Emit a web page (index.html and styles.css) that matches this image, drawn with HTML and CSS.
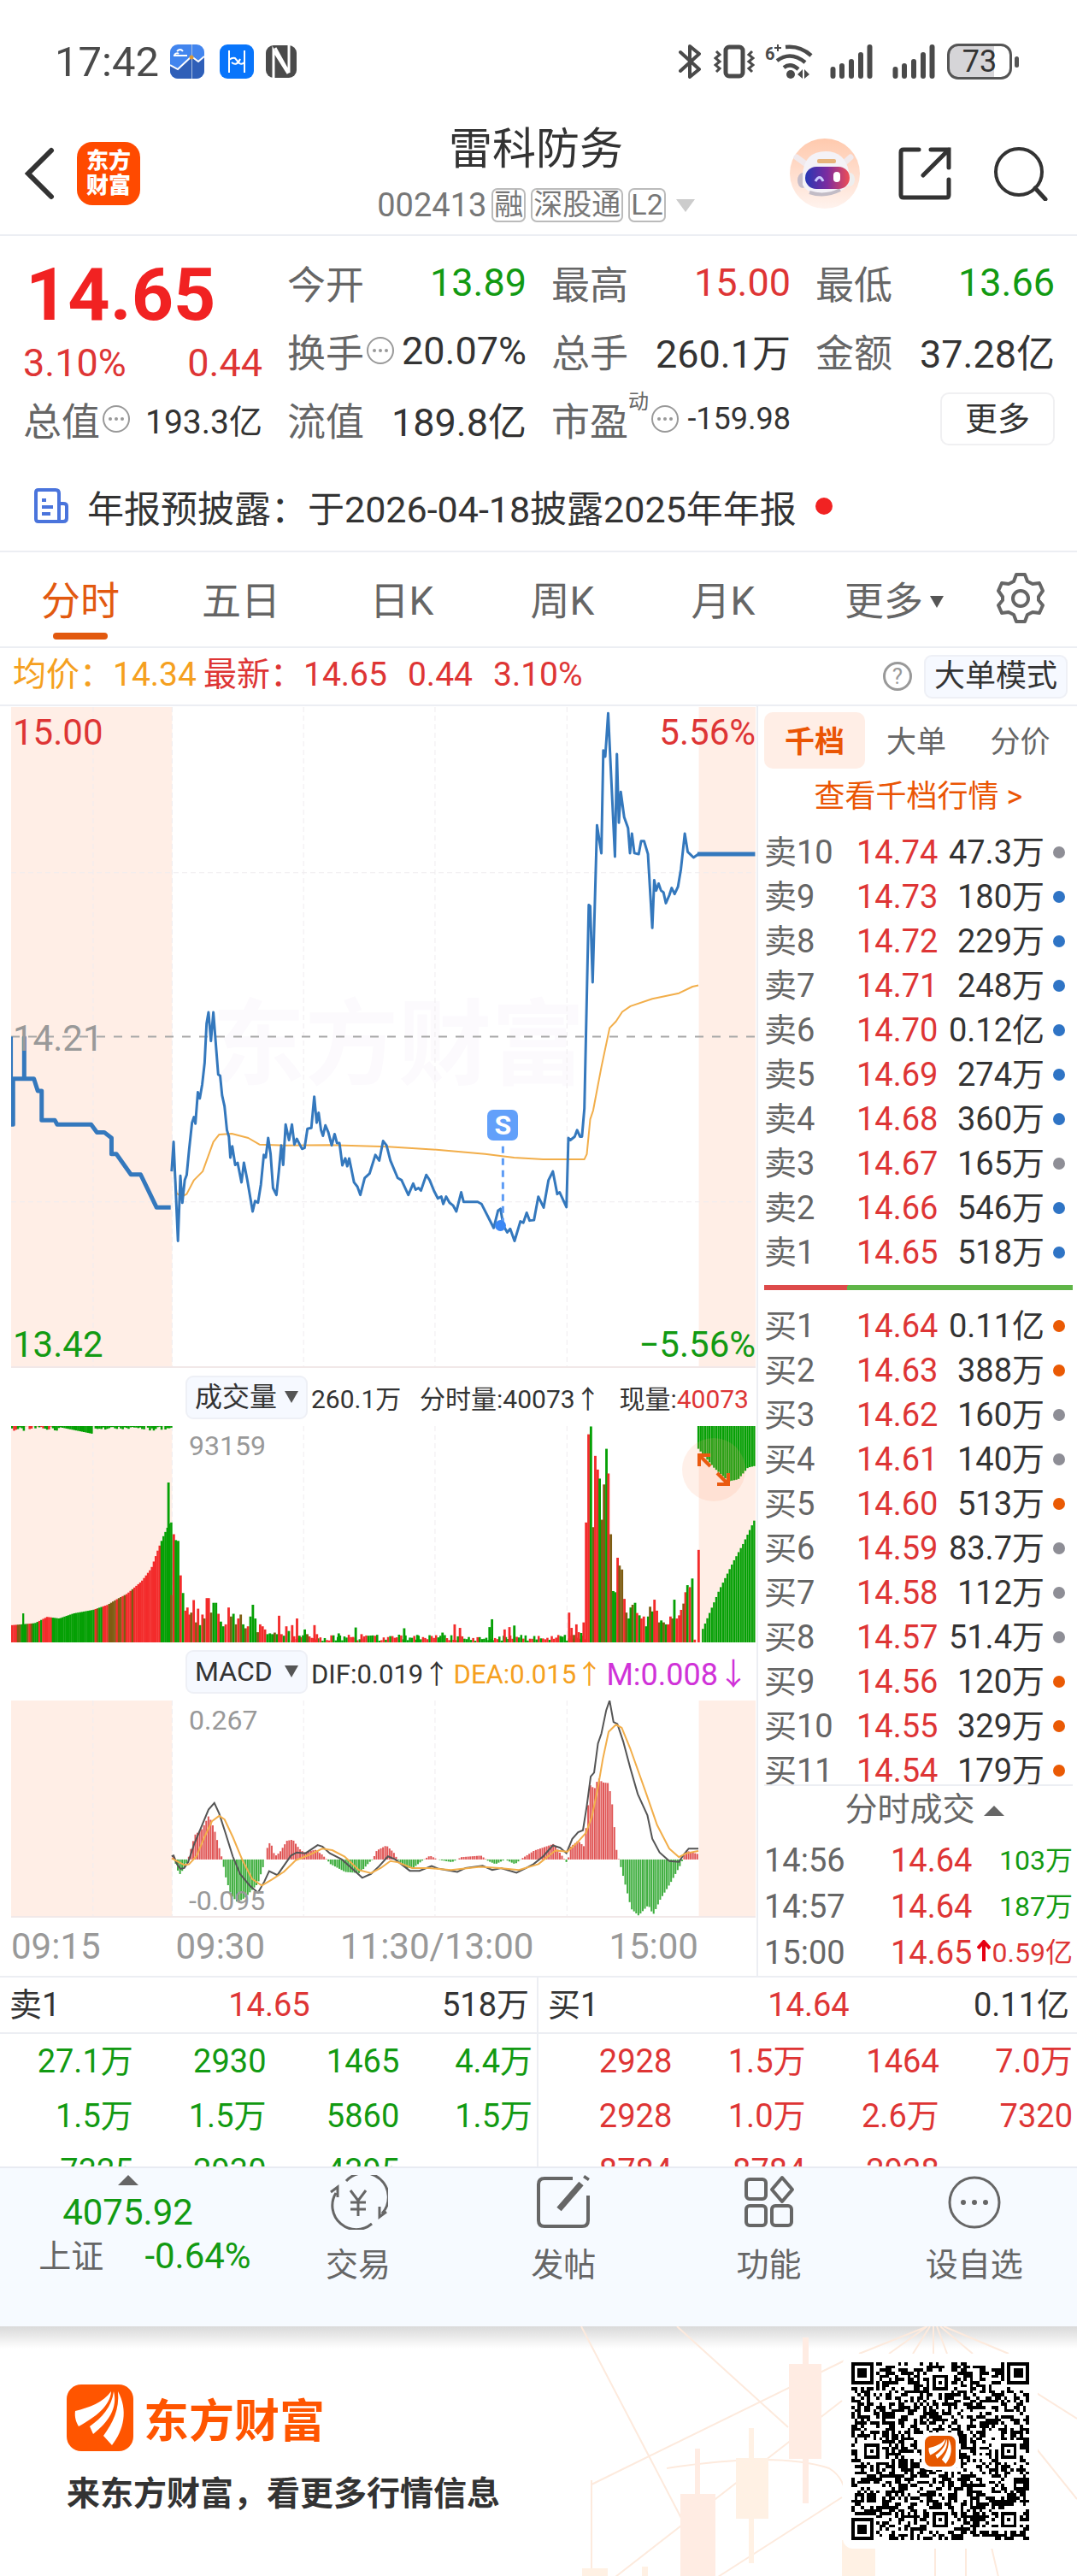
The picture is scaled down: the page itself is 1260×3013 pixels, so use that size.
FILE: index.html
```html
<!DOCTYPE html>
<html lang="zh-CN">
<head>
  <meta charset="utf-8">
  <meta name="viewport" content="width=device-width, initial-scale=1">
  <title>雷科防务 002413</title>
  <link rel="stylesheet" href="styles.css">
</head>
<body>
  <svg width="0" height="0" class="defs" aria-hidden="true">
    <symbol id="dots" viewBox="0 0 34 34">
      <circle cx="17" cy="17" r="15" fill="none" stroke="#999" stroke-width="2"/>
      <circle cx="10" cy="17" r="2" fill="#999"/><circle cx="17" cy="17" r="2" fill="#999"/><circle cx="24" cy="17" r="2" fill="#999"/>
    </symbol>
    <symbol id="signal" viewBox="0 0 50 40">
      <path d="M3.500 29v8M14 25v12M25 20v17M36 12v25M46.500 3v34" stroke="#4a4a4a" stroke-width="6" stroke-linecap="round"/>
    </symbol>
    <symbol id="brand" viewBox="0 0 78 78">
      <rect width="78" height="78" rx="17"/>
      <path d="M10 31c16-4 33-10 42-23-1 17-18 30-38 41-3-5-5-11-4-18z" fill="#fff"/>
      <path d="M55 8c5 19-6 36-24 50l-4-9c14-10 26-23 28-41z" fill="#fff"/>
      <path d="M60 8c12 22 7 45-7 63l-10-11c11-15 19-31 17-52z" fill="#fff"/>
    </symbol>
  </svg>

  <div class="statusbar">
    <div class="status-left">
      <span class="clock">17:42</span>
      <svg class="app-a" width="40" height="40" viewBox="0 0 40 40">
        <rect width="40" height="40" rx="9" fill="#4285ee"/>
        <path d="M0 24l9 5 16-15 8 6 7-6v17a9 9 0 0 1-9 9H9a9 9 0 0 1-9-9z" fill="#2f5fb8"/>
        <path d="M0 24l9 5 16-15 8 6 7-6" fill="none" stroke="#fff" stroke-width="2"/>
        <path d="M25.500 0v40" stroke="#a9bfe0"/>
        <path d="M5 12q3-3 5-1M8 8q4-4 7 0M4 13h16" stroke="#fff" stroke-width="2" fill="none"/>
        <circle cx="25" cy="15" r="2.500" fill="#d99a3a"/>
      </svg>
      <svg class="app-b" width="40" height="40" viewBox="0 0 40 40">
        <rect width="40" height="40" rx="9" fill="#0875fb"/>
        <path d="M11 7v26M29 7v26M11 18q4-3 7-2l5 6q3 2 6-1M14 21q6 5 10-4" fill="none" stroke="#fff" stroke-width="2"/>
      </svg>
      <svg width="36" height="38" viewBox="0 0 36 38">
        <rect width="36" height="38" rx="9" fill="#4a4a4a"/>
        <path d="M9 38V6l17 27M27 0v32L11 3" fill="none" stroke="#fff" stroke-width="3"/>
      </svg>
    </div>
    <div class="status-right">
      <svg class="bluetooth" width="26" height="40" viewBox="0 0 26 40">
        <path d="M2 9l22 20-11 9V2l11 9L2 31" fill="none" stroke="#4a4a4a" stroke-width="4" stroke-linejoin="round" stroke-linecap="round"/>
      </svg>
      <svg class="vibrate" width="48" height="40" viewBox="0 0 48 40">
        <rect x="14" y="3" width="20" height="34" rx="4" fill="none" stroke="#4a4a4a" stroke-width="5"/>
        <path d="M3 8l4 4-5 4 5 4-5 4 5 4-4 4M45 8l-4 4 5 4-5 4 5 4-5 4 4 4" fill="none" stroke="#4a4a4a" stroke-width="3"/>
      </svg>
      <svg class="wifi" width="56" height="42" viewBox="0 0 56 42">
        <text x="0" y="19" font-size="20" fill="#4a4a4a" font-weight="bold">6</text>
        <path d="M11 5h8M15 1v8" stroke="#4a4a4a" stroke-width="2"/>
        <path d="M24 4q17-2 30 10M14 20q16-12 33 2M22 28q8-6 17 2" fill="none" stroke="#4a4a4a" stroke-width="4.500"/>
        <circle cx="30" cy="36" r="5" fill="#4a4a4a"/>
        <path d="M44 30v11l-6-5zM46 30v11l6-5z" fill="#4a4a4a"/>
      </svg>
      <svg class="signal" width="50" height="40"><use href="#signal"/></svg>
      <svg class="signal" width="50" height="40"><use href="#signal"/></svg>
      <span class="battery">73</span>
    </div>
  </div>

  <header class="header">
    <div class="header-left">
      <button class="icon-btn" aria-label="返回">
        <svg width="36" height="62" viewBox="0 0 36 62"><path d="M32 4L5 31l27 27" fill="none" stroke="#333" stroke-width="6" stroke-linecap="round"/></svg>
      </button>
      <div class="app-logo">东方<br>财富</div>
    </div>
    <div class="header-title">
      <h1>雷科防务</h1>
      <div class="code"><span>002413</span><i>融</i><i>深股通</i><i>L2</i><b class="tri-down"></b></div>
    </div>
    <div class="header-right">
      <button class="icon-btn" aria-label="智能助手">
        <svg width="82" height="82" viewBox="0 0 82 82">
          <defs>
            <linearGradient id="halo" x1="0" y1="0" x2="0" y2="1"><stop offset="0" stop-color="#ffc9ad"/><stop offset="1" stop-color="#fff3ee"/></linearGradient>
            <linearGradient id="visor"><stop offset="0" stop-color="#2637b5"/><stop offset=".5" stop-color="#7d2b9f"/><stop offset="1" stop-color="#ef4f55"/></linearGradient>
          </defs>
          <circle cx="41" cy="41" r="41" fill="url(#halo)"/>
          <path d="M8 22l11 8M71 22l-9 8" stroke="#f1e9ec" stroke-width="7" stroke-linecap="round"/>
          <ellipse cx="15" cy="49" rx="6" ry="9" fill="#c5bcc8"/><ellipse cx="70" cy="48" rx="6" ry="8" fill="#eee"/>
          <path d="M15 42q2-27 27-27 22 0 27 23l2 12q-6 14-31 16-20-1-25-12z" fill="#f4f2f7"/>
          <path d="M23 63q18 6 36-3" stroke="#c2bcc6" stroke-width="4" fill="none"/>
          <rect x="18" y="33" width="52" height="26" rx="13" fill="url(#visor)"/>
          <rect x="32" y="24" width="22" height="5" rx="2" fill="#e7b47c"/>
          <path d="M30 50q5-9 9 0" stroke="#c9c8ff" stroke-width="3" fill="none"/><rect x="51" y="39" width="8" height="12" rx="4" fill="#fff"/>
        </svg>
      </button>
      <button class="icon-btn share" aria-label="分享">
        <svg width="62" height="62" viewBox="0 0 62 62"><path d="M24 3H6q-3 0-3 3v50q0 3 3 3h50q3 0 3-3V38M38 3h21v21M59 3L29 33" fill="none" stroke="#333" stroke-width="5" stroke-linecap="round"/></svg>
      </button>
      <button class="icon-btn" aria-label="搜索">
        <svg width="64" height="64" viewBox="0 0 64 64"><circle cx="30" cy="30" r="27" fill="none" stroke="#333" stroke-width="4"/><path d="M49 49l12 13" stroke="#333" stroke-width="5" stroke-linecap="round"/></svg>
      </button>
    </div>
  </header>

  <section class="quote">
    <div class="last">
      <strong>14.65</strong>
      <div class="change"><span>3.10%</span><span>0.44</span></div>
    </div>
    <div class="cell"><span class="name">今开</span><span class="down">13.89</span></div>
    <div class="cell"><span class="name">最高</span><span class="up">15.00</span></div>
    <div class="cell"><span class="name">最低</span><span class="down">13.66</span></div>
    <div class="cell"><span class="name">换手<svg class="dots"><use href="#dots"/></svg></span><span>20.07%</span></div>
    <div class="cell"><span class="name">总手</span><span>260.1万</span></div>
    <div class="cell"><span class="name">金额</span><span>37.28亿</span></div>
    <div class="cell"><span class="name">总值<svg class="dots"><use href="#dots"/></svg></span><span class="small">193.3亿</span></div>
    <div class="cell"><span class="name">流值</span><span>189.8亿</span></div>
    <div class="cell"><span class="name">市盈<sup>动</sup><svg class="dots"><use href="#dots"/></svg></span><span class="tiny">-159.98</span></div>
    <div class="cell end"><button class="more-btn">更多</button></div>
  </section>

  <a class="notice" href="#">
    <svg width="40" height="42" viewBox="0 0 40 42"><path d="M29 39H5q-3 0-3-3V5q0-3 3-3h20q4 0 4 4v33h5q4 0 4-4V21q0-3-4-3h-5M9 14h5M9 22h13M9 30h10" fill="none" stroke="#4a74dc" stroke-width="4"/></svg>
    <span>年报预披露：于2026-04-18披露2025年年报</span>
    <b></b>
  </a>

  <nav class="tabs">
    <button class="active">分时</button>
    <button>五日</button>
    <button>日K</button>
    <button>周K</button>
    <button>月K</button>
    <button class="tab-more">更多<b class="tri-down"></b></button>
    <button class="gear" aria-label="设置">
      <svg width="56" height="60" viewBox="0 0 56 60"><path d="M23 3h10l3 8 6 3 8-1 4 9-5 7v4l5 6-4 9-8-1-6 3-3 8H23l-3-8-6-3-8 1-4-9 5-6v-4l-5-7 4-9 8 1 6-3z" fill="none" stroke="#666" stroke-width="4" stroke-linejoin="round"/><circle cx="28" cy="31" r="9" fill="none" stroke="#666" stroke-width="4"/></svg>
    </button>
  </nav>

  <div class="legend">
    <span class="avg">均价：14.34</span>
    <span class="up">最新：14.65</span>
    <span class="up">0.44</span>
    <span class="up">3.10%</span>
    <span class="help">?</span>
    <button class="soft-btn">大单模式</button>
  </div>

  <main class="main">
    <div class="charts">
      <div class="plot price">
        <div class="watermark">东方财富</div>
        <svg viewBox="23 10 1535 1518" preserveAspectRatio="none">
          <path class="auction" d="M23 12H355V1528H23zM1441 12H1558V1528H1441z"/>
          <path class="grid" d="M192 12V1528M355 12V1528M626 12V1528M897 12V1528M1169 12V1528M23 393H1558M23 1150H1558"/>
          <path class="zero" d="M23 770H1558"/>
          <polyline class="avg-line" points="358,1060 364,1130 375,1138 385,1132 400,1100 418,1080 440,1012 452,995 478,993 512,1003 535,1018 590,1020 680,1019 800,1023 900,1030 1000,1040 1060,1048 1120,1052 1205,1052 1210,1040 1217,960 1223,940 1240,840 1257,750 1270,735 1283,713 1300,700 1345,683 1400,670 1428,655 1440,652"/>
          <path class="price-line" d="M24 770V867"/>
          <path class="price-line thick" d="M20 972H27V867H50V772V867H70L78 895H86V962H113L118 972H188L200 990H215L230 1003V1040H240L270 1087H290L323 1163H352M1438 350H1557"/>
          <polyline class="price-line" points="354,1080 358,1012 367,1240 372,1090 376,1152 381,1100 385,1088 390,1030 396,968 400,955 403,970 408,898 412,912 417,880 422,830 426,740 430,714 435,780 440,714 446,800 450,857 454,860 458,905 463,930 468,985 472,1000 475,1048 479,1022 485,1065 490,1060 498,1105 503,1060 510,1100 521,1172 526,1148 532,1152 538,1110 544,1042 548,1048 553,1003 558,1040 563,1118 570,1134 575,1080 580,1020 584,1065 589,972 596,1008 602,972 607,1018 612,1005 618,1018 623,1028 628,1026 634,982 642,980 648,908 653,968 657,945 662,985 666,998 671,974 677,990 684,1020 690,994 695,1015 700,1015 706,1066 712,1050 716,1068 720,1050 730,1105 737,1115 743,1134 752,1095 762,1085 774,1042 782,1055 790,1010 797,1020 805,1055 820,1095 828,1100 842,1134 852,1108 857,1122 863,1118 868,1124 879,1088 886,1100 895,1125 903,1142 910,1138 914,1155 920,1138 927,1152 934,1158 941,1172 951,1128 956,1150 985,1150 993,1155 1018,1210 1027,1170 1032,1166 1038,1205 1046,1220 1052,1212 1061,1240 1073,1195 1079,1198 1086,1175 1092,1193 1101,1192 1110,1138 1121,1163 1131,1100 1140,1080 1149,1132 1154,1128 1168,1162 1172,1003 1176,1008 1185,1000 1190,985 1196,1000 1200,1000 1205,935 1214,467 1217,470 1222,645 1231,284 1240,348 1244,112 1248,126 1254,26 1268,356 1272,120 1276,278 1280,207 1287,265 1295,290 1299,348 1303,303 1308,348 1317,350 1322,320 1328,320 1336,350 1345,520 1349,410 1353,434 1358,418 1363,434 1368,438 1373,463 1380,445 1385,428 1391,442 1398,425 1404,385 1412,303 1418,345 1430,358 1440,350"/>
          <path class="sell-line" d="M1037 1022V1195"/>
        </svg>
        <span class="tag top up">15.00</span>
        <span class="tag top right up">5.56%</span>
        <span class="tag middle">14.21</span>
        <span class="tag bottom down">13.42</span>
        <span class="tag bottom right down">−5.56%</span>
        <span class="sell-mark">S</span>
        <span class="sell-dot"></span>
      </div>

      <div class="indicator">
        <button class="soft-btn">成交量<b class="tri-down"></b></button>
        <div class="values">
          <span>260.1万</span><span>分时量:40073↑</span><span>现量:<em class="up">40073</em></span>
        </div>
      </div>
      <div class="plot volume">
        <svg id="volume" viewBox="23 149 1535 552" preserveAspectRatio="none">
          <path class="auction" d="M23 149H355V701H23zM1441 149H1558V701H1441z"/>
          <path class="grid" d="M192 149V701M355 149V701M626 149V701M897 149V701M1169 149V701"/>
        </svg>
        <span class="scale top">93159</span>
        <button class="expand" aria-label="放大">
          <svg width="38" height="38" viewBox="0 0 38 38"><path d="M2 15V2h13M2 2l13 13M23 23l13 13M36 23v13H23" fill="none" stroke="#ea5a10" stroke-width="4"/></svg>
        </button>
      </div>

      <div class="indicator">
        <button class="soft-btn">MACD<b class="tri-down"></b></button>
        <div class="values macd-values">
          <span>DIF:0.019↑</span><span class="avg">DEA:0.015↑</span><span class="macd">M:0.008↓</span>
        </div>
      </div>
      <div class="plot macd-plot">
        <svg id="macd" viewBox="23 850 1535 553" preserveAspectRatio="none">
          <path class="auction" d="M23 850H355V1403H23zM1441 850H1558V1403H1441z"/>
          <path class="grid" d="M192 850V1403M355 850V1403M626 850V1403M897 850V1403M1169 850V1403"/>
          <g id="macdBars"></g>
          <polyline class="dif" points="354,1250 358,1248 365,1270 372,1282 380,1280 388,1265 400,1220 415,1175 430,1130 442,1113 452,1140 465,1190 480,1250 495,1295 515,1325 532,1343 545,1315 555,1288 572,1298 600,1248 612,1240 630,1242 655,1221 665,1225 680,1242 705,1258 725,1280 747,1305 765,1295 782,1275 800,1250 815,1258 845,1287 865,1287 890,1275 905,1282 943,1290 960,1280 995,1274 1015,1285 1033,1280 1065,1292 1085,1280 1100,1270 1120,1250 1140,1222 1155,1228 1168,1242 1180,1205 1192,1188 1202,1183 1210,1120 1218,1045 1225,1035 1233,960 1240,935 1250,875 1257,850 1265,905 1273,910 1285,955 1300,1025 1315,1090 1335,1145 1345,1205 1360,1240 1380,1262 1400,1264 1410,1245 1420,1230 1440,1230"/>
          <polyline class="avg-line" points="354,1255 380,1272 390,1270 405,1250 420,1205 437,1160 452,1146 463,1155 480,1200 500,1260 520,1308 540,1325 560,1310 585,1290 610,1260 640,1245 665,1230 685,1234 710,1250 740,1285 765,1293 785,1280 805,1262 820,1265 850,1280 885,1280 930,1285 990,1277 1030,1280 1070,1285 1110,1270 1145,1235 1170,1238 1190,1215 1208,1190 1220,1150 1232,1080 1243,1000 1255,930 1270,912 1282,920 1300,975 1330,1080 1355,1170 1380,1230 1400,1252 1415,1242 1440,1236"/>
        </svg>
        <span class="scale top">0.267</span>
        <span class="scale bottom">-0.095</span>
      </div>
      <div class="axis"><span>09:15</span><span>09:30</span><span>11:30/13:00</span><span>15:00</span></div>
    </div>

    <aside class="side">
      <div class="side-tabs"><button class="active">千档</button><button>大单</button><button>分价</button></div>
      <a class="depth-link" href="#">查看千档行情 &gt;</a>
      <table class="book">
        <tr><th>卖10</th><td>14.74</td><td>47.3万</td><td><b></b></td></tr>
        <tr><th>卖9</th><td>14.73</td><td>180万</td><td><b class="blue"></b></td></tr>
        <tr><th>卖8</th><td>14.72</td><td>229万</td><td><b class="blue"></b></td></tr>
        <tr><th>卖7</th><td>14.71</td><td>248万</td><td><b class="blue"></b></td></tr>
        <tr><th>卖6</th><td>14.70</td><td>0.12亿</td><td><b class="blue"></b></td></tr>
        <tr><th>卖5</th><td>14.69</td><td>274万</td><td><b class="blue"></b></td></tr>
        <tr><th>卖4</th><td>14.68</td><td>360万</td><td><b class="blue"></b></td></tr>
        <tr><th>卖3</th><td>14.67</td><td>165万</td><td><b></b></td></tr>
        <tr><th>卖2</th><td>14.66</td><td>546万</td><td><b class="blue"></b></td></tr>
        <tr><th>卖1</th><td>14.65</td><td>518万</td><td><b class="blue"></b></td></tr>
      </table>
      <div class="ratio"></div>
      <div class="buy-scroll">
        <table class="book">
          <tr><th>买1</th><td>14.64</td><td>0.11亿</td><td><b class="orange"></b></td></tr>
          <tr><th>买2</th><td>14.63</td><td>388万</td><td><b class="orange"></b></td></tr>
          <tr><th>买3</th><td>14.62</td><td>160万</td><td><b></b></td></tr>
          <tr><th>买4</th><td>14.61</td><td>140万</td><td><b></b></td></tr>
          <tr><th>买5</th><td>14.60</td><td>513万</td><td><b class="orange"></b></td></tr>
          <tr><th>买6</th><td>14.59</td><td>83.7万</td><td><b></b></td></tr>
          <tr><th>买7</th><td>14.58</td><td>112万</td><td><b></b></td></tr>
          <tr><th>买8</th><td>14.57</td><td>51.4万</td><td><b></b></td></tr>
          <tr><th>买9</th><td>14.56</td><td>120万</td><td><b class="orange"></b></td></tr>
          <tr><th>买10</th><td>14.55</td><td>329万</td><td><b class="orange"></b></td></tr>
          <tr><th>买11</th><td>14.54</td><td>179万</td><td><b class="orange"></b></td></tr>
        </table>
      </div>
      <button class="trades-title">分时成交<b class="tri-up"></b></button>
      <table class="trades">
        <tr><th>14:56</th><td>14.64</td><td class="down">103万</td></tr>
        <tr><th>14:57</th><td>14.64</td><td class="down">187万</td></tr>
        <tr><th>15:00</th><td>14.65</td><td class="up"><svg width="16" height="26" viewBox="0 0 16 26"><path d="M8 25V3M1 10l7-8 7 8" fill="none" stroke="#e60012" stroke-width="4"/></svg>0.59亿</td></tr>
      </table>
    </aside>
  </main>

  <section class="queues">
    <div class="queue sell">
      <div class="queue-head"><span>卖1</span><span class="up">14.65</span><span>518万</span></div>
      <div class="queue-list down">
        <span>27.1万</span><span>2930</span><span>1465</span><span>4.4万</span>
        <span>1.5万</span><span>1.5万</span><span>5860</span><span>1.5万</span>
        <span>7325</span><span>2930</span><span>4395</span>
      </div>
    </div>
    <div class="queue">
      <div class="queue-head"><span>买1</span><span class="up">14.64</span><span>0.11亿</span></div>
      <div class="queue-list up">
        <span>2928</span><span>1.5万</span><span>1464</span><span>7.0万</span>
        <span>2928</span><span>1.0万</span><span>2.6万</span><span>7320</span>
        <span>8784</span><span>8784</span><span>2928</span>
      </div>
    </div>
  </section>

  <nav class="toolbar">
    <button class="index">
      <b class="tri-up"></b>
      <span class="index-value">4075.92</span>
      <span class="index-row"><span>上证</span><span class="down">-0.64%</span></span>
    </button>
    <button>
      <svg viewBox="0 0 70 64"><path d="M21 7a28 28 0 0 1 42 38M51 57A28 28 0 0 1 9 21M3 20l8-6v12M68 43l-8 6V37M26 18l9 12 9-12M35 30v18M26 32h18M26 40h18" fill="none" stroke="#666" stroke-width="3"/></svg>
      交易
    </button>
    <button>
      <svg viewBox="0 0 70 64"><path d="M46 4H13q-7 0-7 7v42q0 7 7 7h44q7 0 7-7V24" fill="none" stroke="#666" stroke-width="4"/><path d="M56 10L30 40M61 5l2-3" stroke="#666" stroke-width="7"/></svg>
      发帖
    </button>
    <button>
      <svg viewBox="0 0 70 64"><g fill="none" stroke="#666" stroke-width="4"><rect x="8" y="5" width="23" height="23" rx="4"/><path d="M50 3l12 14-12 14-12-14z" stroke-linejoin="round"/><rect x="8" y="36" width="23" height="23" rx="4"/><rect x="38" y="36" width="23" height="23" rx="4"/></g></svg>
      功能
    </button>
    <button>
      <svg viewBox="0 0 70 64"><circle cx="35" cy="32" r="29" fill="none" stroke="#666" stroke-width="3"/><g fill="#666"><circle cx="22" cy="32" r="3"/><circle cx="35" cy="32" r="3"/><circle cx="48" cy="32" r="3"/></g></svg>
      设自选
    </button>
  </nav>

  <footer class="promo">
    <svg class="promo-art" viewBox="660 2720 600 293" aria-hidden="true">
      <g fill="none" stroke="#fdeadd" stroke-width="2">
        <path d="M680 2720L800 2950M792 2720L922 2838M692 2905L988 2760M720 3013L985 2807M840 3013L985 2920M692 2900V3013M780 2886q130-20 190 0 20 12 20 40"/>
        <path d="M1085 2720L1005 2752M1085 2720L1040 2752M1088 2720L1068 2752M1092 2720V2752M1096 2720L1108 2752M1100 2720L1138 2752M1104 2720L1180 2752M1200 2790L1260 2828M1210 2860L1260 2922M1094 2970V3013M1130 2970V3013M1158 2970L1168 3013"/>
      </g>
      <g fill="#fff1e4">
        <path d="M861 2874h38v71h-38zM876 2839h6v158h-6zM985 2970h39v43h-39zM681 3003h30v10h-30zM751 3001h7v12h-7z"/>
        <path d="M923 2764h38v111h-38zM939 2733h7v194h-7zM796 2916h41v97h-41zM813 2863h6v60h-6z" fill="#ffece3"/>
      </g>
    </svg>
    <div class="promo-text">
      <div class="promo-brand"><svg width="78" height="78" fill="#ff5500"><use href="#brand"/></svg>东方财富</div>
      <p>来东方财富，看更多行情信息</p>
    </div>
    <div class="qr">
      <svg id="qr" viewBox="0 0 57 57" shape-rendering="crispEdges" role="img" aria-label="二维码"></svg>
      <span class="qr-logo"><svg width="36" height="36" viewBox="0 0 78 78" fill="#e65800"><use href="#brand"/></svg></span>
    </div>
  </footer>

  <script src="script.js"></script>
</body>
</html>
```
FILE: styles.css
```css
* {
  margin: 0;
  padding: 0;
  box-sizing: border-box;
}

body {
  font-family: Roboto, "Noto Sans CJK SC", sans-serif;
  font-size: 38px;
  color: #333;
  background: #fff;
}

button {
  font: inherit;
  color: inherit;
  background: none;
  border: none;
  cursor: pointer;
}

a {
  color: inherit;
  text-decoration: none;
}

i, em {
  font-style: normal;
}

svg {
  display: block;
  flex: none;
}

.defs {
  position: absolute;
}

.up {
  color: #de3535;
}

.down {
  color: #129a12;
}

.avg {
  color: #f5a020;
}

.tri-down,
.tri-up {
  display: inline-block;
  border: 8px solid transparent;
  border-top: 14px solid #555;
  border-bottom: 0;
}

.tri-up {
  border: 12px solid transparent;
  border-bottom: 12px solid #666;
  border-top: 0;
}

/* status bar */
.statusbar {
  display: flex;
  justify-content: space-between;
  align-items: center;
  height: 98px;
  padding: 46px 76px 0 64px;
}

.status-left,
.status-right {
  display: flex;
  align-items: center;
}

.clock {
  font-size: 49px;
  color: #4a4a4a;
  margin-right: 13px;
}

.app-a {
  margin-right: 18px;
}

.app-b {
  margin-right: 14px;
}

.bluetooth {
  margin-right: 15px;
}

.vibrate {
  margin-right: 12px;
}

.wifi {
  margin-right: 20px;
}

.signal {
  margin-right: 23px;
}

.signal + .signal {
  margin-right: 14px;
}

.battery {
  position: relative;
  width: 76px;
  height: 42px;
  border: 3px solid #555;
  border-radius: 13px;
  background: linear-gradient(90deg, #d6d5d8 75%, #fff 75%);
  font-size: 36px;
  line-height: 37px;
  text-align: center;
}

.battery::after {
  content: '';
  position: absolute;
  right: -11px;
  top: 12px;
  width: 5px;
  height: 13px;
  border-radius: 3px;
  background: #555;
}

/* header */
.header {
  display: grid;
  grid-template-columns: 1fr auto 1fr;
  align-items: center;
  padding: 47px 34px 14px 28px;
  border-bottom: 2px solid #eceef3;
}

.header-left,
.header-right {
  display: flex;
  align-items: center;
}

.header-left {
  gap: 26px;
}

.header-right {
  justify-content: flex-end;
}

.share {
  margin: 0 49px 0 45px;
}

.app-logo {
  width: 74px;
  height: 74px;
  padding-top: 8px;
  border-radius: 18px;
  background: #ff4a00;
  color: #fff;
  font-size: 26px;
  font-weight: 900;
  line-height: 29px;
  text-align: center;
}

.header-title h1 {
  font-size: 51px;
  font-weight: 400;
  line-height: 60px;
  text-align: center;
}

.code {
  display: flex;
  align-items: center;
  gap: 6px;
  height: 40px;
  margin-top: 15px;
  color: #777;
}

.code i {
  height: 40px;
  padding: 0 1px;
  border: 2px solid #bbb;
  border-radius: 7px;
  font-size: 34px;
  line-height: 34px;
}

.code .tri-down {
  margin-left: 6px;
  border-width: 15px 11px 0;
  border-top-color: #ccc;
}

/* quote summary */
.quote {
  display: grid;
  grid-template-columns: repeat(4, 1fr);
  grid-auto-rows: 80px;
  column-gap: 29px;
  padding: 14px 26px 0 27px;
  font-size: 45px;
}

.last {
  grid-row: span 2;
}

.last strong {
  display: block;
  padding-left: 3px;
  color: #f12222;
  font-size: 86px;
  line-height: 110px;
}

.change {
  display: flex;
  justify-content: space-between;
  color: #de3535;
  line-height: 50px;
}

.cell {
  display: flex;
  justify-content: space-between;
  align-items: center;
}

.cell.end {
  justify-content: flex-end;
}

.cell .name {
  display: flex;
  align-items: center;
  color: #666;
}

.cell sup {
  align-self: flex-start;
  font-size: 24px;
  line-height: 24px;
}

.cell .small {
  font-size: 39px;
}

.cell .tiny {
  font-size: 36px;
}

.dots {
  width: 34px;
  height: 34px;
  margin-left: 2px;
}

.more-btn {
  width: 134px;
  height: 62px;
  border: 2px solid #f0f0f2;
  border-radius: 10px;
  font-size: 38px;
  line-height: 56px;
}

.notice {
  display: flex;
  align-items: center;
  gap: 22px;
  height: 116px;
  padding: 9px 40px 0;
  border-bottom: 2px solid #eceef3;
  font-size: 43px;
}

.notice b {
  width: 20px;
  height: 20px;
  border-radius: 50%;
  background: #f12222;
}

/* period tabs */
.tabs {
  display: grid;
  grid-template-columns: repeat(5, 188fr) 212fr 84fr;
  height: 112px;
  padding-right: 24px;
  border-bottom: 2px solid #eceef3;
  font-size: 46px;
  color: #666;
}

.tabs button {
  position: relative;
  padding-bottom: 4px;
}

.tabs .active {
  color: #e2590f;
}

.tabs .active::after {
  content: '';
  position: absolute;
  left: calc(50% - 32px);
  width: 64px;
  bottom: 8px;
  height: 8px;
  border-radius: 4px;
  background: #e2590f;
}

.tab-more .tri-down {
  margin: 0 0 8px 8px;
}

.gear svg {
  margin: 0 auto;
}

.legend {
  display: flex;
  align-items: center;
  gap: 24px;
  height: 68px;
  padding: 0 11px 0 15px;
  border-bottom: 2px solid #eceef3;
}

.legend .avg,
.legend .up {
  font-size: 39px;
  line-height: 60px;
  padding-bottom: 4px;
}

.legend .avg {
  margin-right: -16px;
}

.help {
  width: 34px;
  height: 34px;
  margin: 0 -10px 0 auto;
  border: 3px solid #999;
  border-radius: 50%;
  color: #999;
  font-size: 26px;
  line-height: 29px;
  text-align: center;
}

.soft-btn {
  height: 51px;
  padding: 0 10px;
  border: 2px solid #eef0f6;
  border-radius: 9px;
  background: #f6f9ff;
  font-size: 36px;
  line-height: 46px;
}

/* charts */
.main {
  display: grid;
  grid-template-columns: 1fr 373px;
  border-bottom: 2px solid #eceef3;
}

.charts {
  padding: 0 1px 0 13px;
  border-right: 2px solid #eceef3;
}

.plot {
  position: relative;
}

.plot > svg {
  position: relative;
  width: 100%;
  height: 100%;
}

.plot svg * {
  vector-effect: non-scaling-stroke;
}

.price {
  height: 774px;
  border-bottom: 2px solid #f1e8e8;
}

.volume {
  height: 253px;
}

.macd-plot {
  height: 254px;
  border-bottom: 2px solid #f1e8e8;
}

.auction {
  fill: #ffeee6;
}

.grid {
  fill: none;
  stroke: #efecef;
  stroke-width: 1;
  stroke-dasharray: 6 4;
}

.zero {
  stroke: #a8a8a8;
  stroke-width: 2;
  stroke-dasharray: 10 10;
}

.price-line,
.avg-line,
.dif {
  fill: none;
  stroke: #3478bd;
  stroke-width: 3;
}

.price-line.thick {
  stroke-width: 5;
}

.avg-line {
  stroke: #f2ae4a;
  stroke-width: 2;
}

.dif {
  stroke: #555;
  stroke-width: 2;
}

.price-line,
.avg-line {
  stroke-linejoin: round;
}

.sell-line {
  stroke: #5d9cf5;
  stroke-width: 3;
  stroke-dasharray: 8 6;
}

.watermark {
  position: absolute;
  top: 50%;
  left: 52%;
  transform: translate(-50%, -50%);
  color: #fcfafd;
  font-size: 109px;
  font-weight: 700;
  white-space: nowrap;
}

.tag {
  position: absolute;
  left: 2px;
  font-size: 42px;
  line-height: 50px;
}

.tag.right {
  left: auto;
  right: 0;
}

.tag.top {
  top: 6px;
}

.tag.middle {
  top: 364px;
  color: #999;
}

.tag.bottom {
  bottom: 0;
}

.sell-mark {
  position: absolute;
  left: 64%;
  top: 472px;
  width: 36px;
  height: 36px;
  border-radius: 7px;
  background: #62a0fa;
  color: #fff;
  font-size: 32px;
  font-weight: 700;
  line-height: 36px;
  text-align: center;
}

.sell-dot {
  position: absolute;
  left: 65%;
  top: 601px;
  width: 13px;
  height: 13px;
  border-radius: 50%;
  background: #3b88f5;
}

.indicator {
  display: flex;
  align-items: center;
  gap: 4px;
  height: 68px;
  padding: 0 8px 0 204px;
  font-size: 30px;
}

.indicator .soft-btn {
  display: flex;
  justify-content: space-between;
  align-items: center;
  width: 143px;
  padding: 0 9px;
  font-size: 32px;
}

.values {
  display: flex;
  flex: 1;
  justify-content: space-between;
  align-items: center;
  white-space: nowrap;
}

.macd-values {
  font-size: 31px;
}

.macd {
  color: #d033d8;
  font-size: 36px;
}

.scale {
  position: absolute;
  left: 208px;
  color: #999;
  font-size: 32px;
  line-height: 36px;
}

.scale.top {
  top: 5px;
}

.scale.bottom {
  bottom: 0;
}

.expand {
  position: absolute;
  right: 12px;
  top: 14px;
  width: 74px;
  height: 74px;
  padding-left: 18px;
  border-radius: 50%;
  background: rgba(255, 160, 120, 0.16);
}

.axis {
  display: flex;
  justify-content: space-between;
  padding-right: 67px;
  color: #999;
  font-size: 42px;
  line-height: 68px;
}

/* order book */
.side {
  padding: 7px 5px 0 7px;
}

.side-tabs {
  display: grid;
  grid-template-columns: 118px 120px 1fr;
  height: 66px;
  color: #666;
  font-size: 35px;
}

.side-tabs button {
  padding-bottom: 4px;
}

.side-tabs .active {
  border-radius: 10px;
  background: #ffeee6;
  color: #ea5504;
  font-weight: 700;
}

.depth-link {
  display: block;
  margin-bottom: 6px;
  color: #ea5504;
  font-size: 36px;
  line-height: 66px;
  text-align: center;
}

.book,
.trades {
  width: 100%;
  border-collapse: collapse;
  table-layout: fixed;
  line-height: 44px;
}

.book tr {
  height: 52px;
}

.book th {
  width: 108px;
  color: #666;
  font-weight: 400;
  text-align: left;
}

.book td:nth-child(2) {
  width: 96px;
  color: #de3535;
}

.book td:nth-child(3) {
  text-align: right;
}

.book td:last-child {
  width: 33px;
}

.book b {
  display: block;
  width: 14px;
  height: 14px;
  margin: 0 auto;
  border-radius: 50%;
  background: #8e8e96;
}

.book .blue {
  background: #2f74c5;
}

.book .orange {
  background: #ea5a04;
}

.ratio {
  height: 6px;
  margin: 12px 0 16px;
  background: linear-gradient(100deg, #dd4a4a 27%, #5fb548 27%);
}

.buy-scroll {
  height: 562px;
  overflow: hidden;
}

.trades-title {
  display: block;
  width: 100%;
  padding: 0 0 6px 14px;
  border-top: 2px solid #eceef3;
  color: #666;
  line-height: 54px;
}

.trades-title .tri-up {
  margin: 0 0 5px 10px;
}

.trades tr {
  height: 54px;
}

.trades th {
  width: 148px;
  color: #666;
  font-weight: 400;
  text-align: left;
}

.trades td:nth-child(2) {
  width: 96px;
  color: #de3535;
}

.trades td:last-child {
  font-size: 32px;
  text-align: right;
  white-space: nowrap;
}

.trades svg {
  display: inline-block;
  margin-right: 2px;
}

/* order queues */
.queues {
  display: grid;
  grid-template-columns: 1fr 1fr;
}

.sell {
  border-right: 2px solid #eceef3;
}

.queue-head {
  display: grid;
  grid-template-columns: 1fr auto 1fr;
  padding: 0 9px 0 11px;
  border-bottom: 2px solid #eceef3;
  line-height: 64px;
}

.queue-head span:last-child {
  text-align: right;
}

.queue-list {
  display: grid;
  grid-template-columns: repeat(4, 1fr);
  grid-auto-rows: 64px;
  height: 155px;
  padding-right: 5px;
  overflow: hidden;
  line-height: 64px;
  text-align: right;
}

.toolbar {
  display: grid;
  grid-template-columns: 299px repeat(4, 1fr);
  height: 187px;
  border-top: 2px solid #e8ebf2;
  background: #f6faff;
  color: #666;
}

.toolbar button {
  display: flex;
  flex-direction: column;
  align-items: center;
  padding-top: 8px;
  line-height: 54px;
}

.toolbar svg {
  width: 70px;
  height: 64px;
  margin-bottom: 14px;
}

.index-value {
  color: #129a12;
  font-size: 42px;
  line-height: 48px;
  margin-top: 8px;
}

.index-row {
  display: flex;
  gap: 48px;
  padding-left: 40px;
}

.index-row .down {
  font-size: 42px;
}

/* promotion footer */
.promo {
  position: relative;
  display: flex;
  justify-content: space-between;
  align-items: flex-start;
  height: 293px;
  padding: 32px 46px 0 78px;
  overflow: hidden;
}

.promo::before {
  content: '';
  position: absolute;
  inset: 0 0 auto;
  height: 26px;
  background: linear-gradient(rgba(0, 0, 0, 0.15), transparent);
}

.promo-art {
  position: absolute;
  top: 0;
  right: 0;
  width: 600px;
  height: 293px;
}

.promo-text {
  padding-top: 36px;
}

.promo-brand {
  display: flex;
  align-items: center;
  gap: 12px;
  height: 78px;
  color: #ff5500;
  font-size: 53px;
  font-weight: 700;
}

.promo p {
  margin-top: 22px;
  font-size: 39px;
  font-weight: 600;
  line-height: 56px;
}

.qr {
  position: relative;
  padding: 10px;
  border-radius: 12px;
  background: #fff;
}

.qr > svg {
  width: 208px;
  height: 208px;
}

.qr-logo {
  position: absolute;
  top: 50%;
  left: 50%;
  padding: 4px;
  border-radius: 8px;
  background: #fff;
  transform: translate(-50%, -50%);
}
```
FILE: script.js
```js
const SVG_NS = 'http://www.w3.org/2000/svg';
const RED = '#f32b2b';
const GREEN = '#05a005';
const MIXED = '#7d5c12';

let seed = 20260418;
function rand() {
  seed = (seed * 1103515245 + 12345) % 2147483648;
  return seed / 2147483648;
}

function addRect(parent, x, y, w, h, fill) {
  const rect = document.createElementNS(SVG_NS, 'rect');
  rect.setAttribute('x', x);
  rect.setAttribute('y', y);
  rect.setAttribute('width', w);
  rect.setAttribute('height', h);
  rect.setAttribute('fill', fill);
  parent.appendChild(rect);
}

// linear interpolation over a list of [x, y]
function at(points, x) {
  for (let i = 1; i < points.length; i++) {
    if (x <= points[i][0]) {
      const [x0, y0] = points[i - 1];
      const [x1, y1] = points[i];
      return y0 + (y1 - y0) * (x - x0) / (x1 - x0);
    }
  }
  return points[points.length - 1][1];
}

/* volume */
const volume = document.getElementById('volume');
const base = 701;
const auction = [[23, 657], [70, 652], [95, 636], [120, 640], [150, 627], [190, 618], [220, 605], [240, 590],
  [260, 577], [290, 545], [310, 512], [325, 460], [335, 430], [348, 395], [352, 395]];

for (let x = 23; x < 352; x += 4) {
  const y = at(auction, x);
  let color = RED;
  if ((x > 105 && x < 195) || x > 330) color = GREEN;
  else if ((x > 195 && x < 245) || (x > 40 && x < 85)) color = rand() > 0.5 ? MIXED : (rand() > 0.5 ? RED : GREEN);
  else if (rand() > 0.8) color = MIXED;
  addRect(volume, x, y, 4.5, base - y, color);
  const up = x > 120 && x < 190 ? (x - 110) / 4 : rand() * 12;
  addRect(volume, x, 149, 4.5, up, rand() > 0.6 && x < 110 ? RED : GREEN);
}
addRect(volume, 46, 627, 4, base - 627, GREEN);
addRect(volume, 345, 293, 5, base - 293, GREEN);
addRect(volume, 351, 580, 4, base - 580, MIXED);

const bars = [[358, 425, 'r'], [362, 440, 'g'], [367, 442, 'g'], [372, 530, 'r'], [377, 575, 'g'], [382, 620, 'r'],
  [386, 612, 'r'], [390, 630, 'r'], [394, 625, 'm'], [399, 593, 'r'], [404, 650, 'm'], [408, 615, 'r'], [412, 657, 'g'],
  [417, 630, 'r'], [421, 640, 'm'], [426, 588, 'r'], [430, 588, 'r'], [435, 625, 'm'], [440, 600, 'g'], [445, 600, 'g'],
  [450, 628, 'r'], [455, 648, 'g'], [460, 660, 'g'], [465, 655, 'r'], [471, 612, 'r'], [476, 635, 'm'], [481, 628, 'g'],
  [486, 655, 'm'], [491, 640, 'r'], [496, 630, 'm'], [501, 655, 'g'], [506, 665, 'm'], [511, 660, 'r'], [516, 635, 'g'],
  [521, 605, 'g'], [526, 640, 'g'], [531, 675, 'm'], [536, 655, 'r'], [541, 660, 'r'], [546, 668, 'r'], [551, 680, 'g'],
  [556, 678, 'g'], [561, 680, 'g'], [566, 676, 'm'], [571, 680, 'g'], [575, 633, 'r'], [580, 680, 'r'], [585, 684, 'g'],
  [590, 660, 'r'], [595, 672, 'g'], [602, 657, 'r'], [612, 640, 'r'], [617, 684, 'g'], [628, 668, 'g'], [633, 680, 'm'],
  [648, 657, 'r'], [653, 680, 'r'], [698, 678, 'g'], [733, 663, 'g'], [745, 680, 'r'], [833, 665, 'g'], [860, 682, 'g'],
  [912, 676, 'g'], [937, 655, 'r'], [948, 664, 'r'], [1009, 662, 'g'], [1014, 642, 'g'], [1040, 668, 'r'], [1050, 662, 'r'],
  [1060, 658, 'g'], [1173, 625, 'r'], [1178, 664, 'r'], [1183, 682, 'm'], [1188, 655, 'r'], [1193, 675, 'r'],
  [1198, 677, 'g'], [1203, 650, 'r'], [1208, 395, 'r'], [1213, 170, 'r'], [1218, 150, 'g'], [1223, 407, 'm'],
  [1227, 225, 'r'], [1232, 260, 'r'], [1236, 283, 'g'], [1241, 388, 'm'], [1245, 298, 'm'], [1250, 207, 'g'],
  [1254, 270, 'r'], [1259, 425, 'm'], [1264, 570, 'g'], [1268, 573, 'g'], [1273, 485, 'r'], [1277, 505, 'm'],
  [1282, 515, 'm'], [1287, 590, 'r'], [1291, 625, 'm'], [1296, 640, 'g'], [1300, 612, 'g'], [1304, 605, 'm'],
  [1309, 600, 'g'], [1313, 626, 'r'], [1318, 632, 'g'], [1322, 640, 'r'], [1327, 635, 'r'], [1332, 660, 'g'],
  [1336, 635, 'g'], [1340, 610, 'm'], [1345, 622, 'g'], [1349, 592, 'r'], [1354, 620, 'r'], [1359, 650, 'm'],
  [1363, 645, 'g'], [1368, 650, 'm'], [1373, 655, 'g'], [1377, 655, 'r'], [1382, 635, 'r'], [1386, 640, 'm'],
  [1390, 592, 'g'], [1395, 640, 'r'], [1400, 632, 'r'], [1404, 618, 'r'], [1409, 602, 'm'], [1413, 573, 'r'],
  [1417, 555, 'g'], [1422, 560, 'r'], [1427, 538, 'g'], [1432, 694, 'r'], [1440, 465, 'r']];

for (let x = 600; x < 1205; x += 4.5) {
  const y = 681 + rand() * 16;
  addRect(volume, x, y, 4.5, base - y, rand() > 0.45 ? RED : GREEN);
}
const colors = { r: RED, g: GREEN, m: MIXED };
bars.forEach(([x, y, c]) => addRect(volume, x - 2, y, 5, base - y, colors[c]));

// closing auction
const hang = [[1438, 207], [1470, 255], [1500, 290], [1520, 285], [1540, 255], [1557, 250]];
for (let x = 1438; x < 1557; x += 4.6) {
  addRect(volume, x, 149, 4.2, at(hang, x) - 149, GREEN);
  if (x > 1444) {
    const y = at([[1446, 670], [1480, 570], [1510, 495], [1530, 450], [1557, 380]], x);
    addRect(volume, x, y, 4.2, base - y, GREEN);
  }
}

/* macd */
const macdBars = document.getElementById('macdBars');
const macd = [[356, 1250], [362, 1275], [368, 1298], [378, 1280], [385, 1262], [390, 1240], [400, 1195], [415, 1180],
  [429, 1145], [440, 1180], [455, 1250], [457, 1262], [465, 1310], [475, 1350], [488, 1368], [505, 1355], [515, 1340],
  [530, 1320], [540, 1280], [545, 1258], [550, 1225], [556, 1212], [565, 1250], [575, 1240], [590, 1210], [602, 1207],
  [615, 1230], [625, 1240], [648, 1233], [662, 1245], [672, 1258], [680, 1270], [710, 1290], [740, 1293], [760, 1265],
  [767, 1258], [775, 1235], [795, 1222], [810, 1240], [818, 1258], [835, 1280], [850, 1280], [870, 1260], [885, 1248],
  [900, 1258], [930, 1265], [950, 1252], [990, 1248], [1005, 1262], [1020, 1270], [1040, 1258], [1060, 1270],
  [1075, 1255], [1100, 1235], [1140, 1218], [1155, 1245], [1168, 1268], [1175, 1225], [1190, 1210], [1203, 1225],
  [1210, 1130], [1216, 1062], [1223, 1080], [1232, 1048], [1240, 1060], [1253, 1062], [1260, 1110], [1270, 1240],
  [1276, 1265], [1285, 1310], [1300, 1385], [1315, 1402], [1335, 1375], [1345, 1400], [1360, 1360], [1380, 1320],
  [1400, 1275], [1406, 1258], [1412, 1235], [1440, 1245]];

for (let x = 356; x < 1440; x += 4.5) {
  const y = at(macd, x);
  if (y < 1258) addRect(macdBars, x, y, 3.6, 1258 - y, '#e05656');
  else addRect(macdBars, x, 1258, 3.6, y - 1258, '#3fae3f');
}

/* qr code */
const qr = document.getElementById('qr');
const size = 57;

function ring(cx, cy, r) {
  addRect(qr, cx - r - 1, cy - r - 1, 2 * r + 3, 2 * r + 3, '#fff');
  addRect(qr, cx - r, cy - r, 2 * r + 1, 2 * r + 1, '#000');
  addRect(qr, cx - r + 1, cy - r + 1, 2 * r - 1, 2 * r - 1, '#fff');
  addRect(qr, cx - r + 2, cy - r + 2, 2 * r - 3, 2 * r - 3, '#000');
}

for (let y = 0; y < size; y++) {
  for (let x = 0; x < size; x++) {
    if (rand() > 0.5) addRect(qr, x, y, 1, 1, '#000');
  }
}
[[3, 3], [53, 3], [3, 53]].forEach(([x, y]) => ring(x, y, 3));
[[28, 6], [6, 28], [50, 28], [28, 50], [50, 50]].forEach(([x, y]) => ring(x, y, 2));
```
